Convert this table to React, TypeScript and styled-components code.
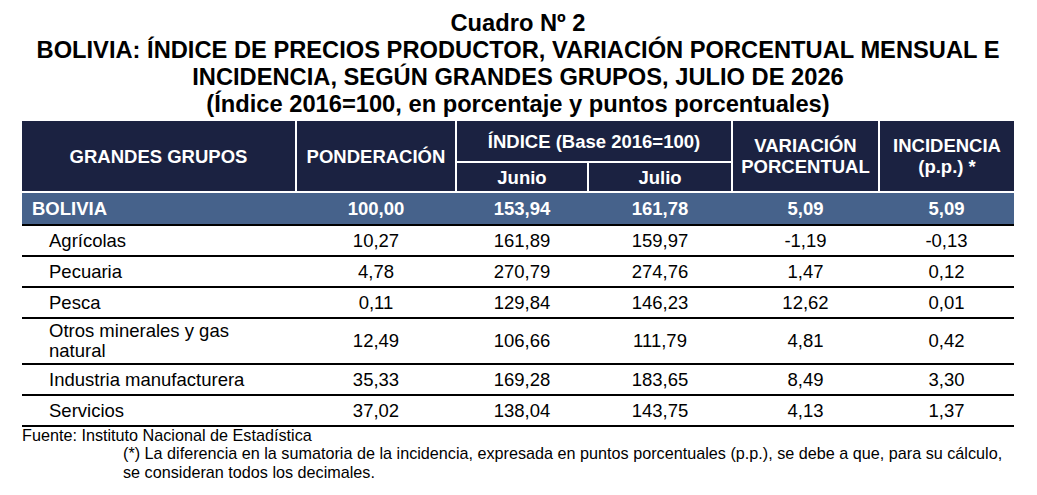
import React from "react";
import styled, { createGlobalStyle } from "styled-components";

const GlobalStyle = createGlobalStyle`
  html, body {
    margin: 0;
    padding: 0;
    background: #ffffff;
  }
  body {
    font-family: "Liberation Sans", Arial, sans-serif;
    color: #000000;
  }
`;

const NAVY = "#1b2241";
const STEEL = "#46628b";

const Page = styled.div`
  width: 992px;
  padding: 10px 0 0 22px;
`;

const Title = styled.h1`
  margin: 0 0 3px;
  font-size: 23.7px;
  line-height: 27px;
  font-weight: 700;
  text-align: center;
`;

const Table = styled.table`
  width: 992px;
  border-collapse: collapse;
  table-layout: fixed;
  font-size: 18.5px;
`;

const HeadCell = styled.th<{ $last?: boolean; $h: number }>`
  background: ${NAVY};
  color: #ffffff;
  font-weight: 700;
  font-size: 18.5px;
  line-height: 21px;
  height: ${(p) => p.$h}px;
  padding: 0;
  text-align: center;
  vertical-align: middle;
  border-right: ${(p) => (p.$last ? "none" : "2px solid #ffffff")};
  border-bottom: 2px solid #ffffff;
`;

const TotalRow = styled.tr`
  background: ${STEEL};
  color: #ffffff;
  font-weight: 700;
  border-bottom: 2px solid #000000;

  td {
    height: 27px;
  }
`;

const Row = styled.tr`
  border-bottom: 2px solid #000000;
`;

const Cell = styled.td<{ $indent?: number }>`
  height: 25px;
  padding: 2px ${(p) => (p.$indent !== undefined ? "12px" : "0")} 2px
    ${(p) => (p.$indent !== undefined ? `${p.$indent}px` : "0")};
  text-align: ${(p) => (p.$indent !== undefined ? "left" : "center")};
  vertical-align: middle;
  line-height: 20px;
`;

const Notes = styled.div`
  font-size: 16.2px;
  line-height: 19px;
`;

const Source = styled.p`
  margin: 0;
  line-height: 17px;
`;

const Indented = styled.p`
  margin: 0;
  padding-left: 101px;
`;

type Item = { name: string; v: string[] };

const items: Item[] = [
  { name: "Agrícolas", v: ["10,27", "161,89", "159,97", "-1,19", "-0,13"] },
  { name: "Pecuaria", v: ["4,78", "270,79", "274,76", "1,47", "0,12"] },
  { name: "Pesca", v: ["0,11", "129,84", "146,23", "12,62", "0,01"] },
  { name: "Otros minerales y gas natural", v: ["12,49", "106,66", "111,79", "4,81", "0,42"] },
  { name: "Industria manufacturera", v: ["35,33", "169,28", "183,65", "8,49", "3,30"] },
  { name: "Servicios", v: ["37,02", "138,04", "143,75", "4,13", "1,37"] },
];

const widths = [274, 160, 132, 144, 147, 135];

export default function App() {
  return (
    <>
      <GlobalStyle />
      <Page>
        <Title>
          Cuadro Nº 2
          <br />
          BOLIVIA: ÍNDICE DE PRECIOS PRODUCTOR, VARIACIÓN PORCENTUAL MENSUAL E
          <br />
          INCIDENCIA, SEGÚN GRANDES GRUPOS, JULIO DE 2026
          <br />
          (Índice 2016=100, en porcentaje y puntos porcentuales)
        </Title>
        <Table>
          <colgroup>
            {widths.map((w, i) => (
              <col key={i} style={{ width: w }} />
            ))}
          </colgroup>
          <thead>
            <tr>
              <HeadCell rowSpan={2} $h={40}>GRANDES GRUPOS</HeadCell>
              <HeadCell rowSpan={2} $h={40}>PONDERACIÓN</HeadCell>
              <HeadCell colSpan={2} $h={40}>ÍNDICE (Base 2016=100)</HeadCell>
              <HeadCell rowSpan={2} $h={40}>
                VARIACIÓN
                <br />
                PORCENTUAL
              </HeadCell>
              <HeadCell rowSpan={2} $h={40} $last>
                INCIDENCIA
                <br />
                (p.p.) *
              </HeadCell>
            </tr>
            <tr>
              <HeadCell $h={28}>Junio</HeadCell>
              <HeadCell $h={28}>Julio</HeadCell>
            </tr>
          </thead>
          <tbody>
            <TotalRow>
              <Cell $indent={10}>BOLIVIA</Cell>
              <Cell>100,00</Cell>
              <Cell>153,94</Cell>
              <Cell>161,78</Cell>
              <Cell>5,09</Cell>
              <Cell>5,09</Cell>
            </TotalRow>
            {items.map((it) => (
              <Row key={it.name}>
                <Cell $indent={27}>{it.name}</Cell>
                {it.v.map((x, i) => (
                  <Cell key={i}>{x}</Cell>
                ))}
              </Row>
            ))}
          </tbody>
        </Table>
        <Notes>
          <Source>Fuente: Instituto Nacional de Estadística</Source>
          <Indented>
            (*) La diferencia en la sumatoria de la incidencia, expresada en puntos porcentuales (p.p.), se debe a que, para su cálculo, se consideran todos los decimales.
          </Indented>
        </Notes>
      </Page>
    </>
  );
}
